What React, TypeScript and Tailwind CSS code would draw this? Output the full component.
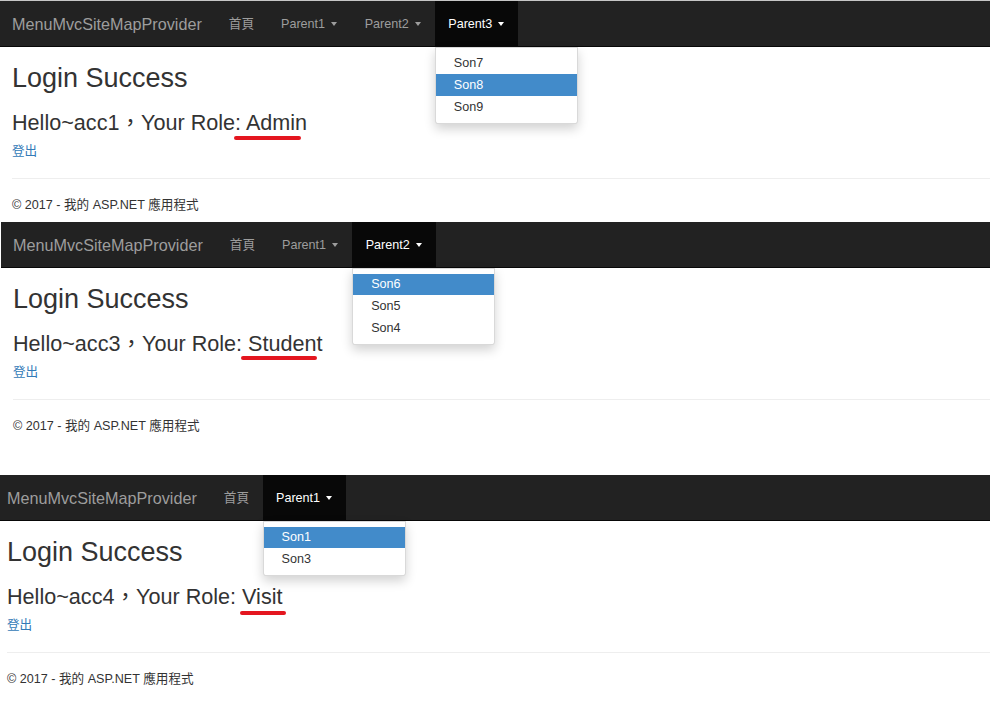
import React from 'react'

const FONT = '"Liberation Sans", Arial, "Noto Sans CJK TC", sans-serif'

type Shot = {
  user: string
  role: string
  menus: string[]
  active: string
  items: string[]
  highlight: string
  shift: string
  spacing: string
  mark: string
  topLine?: boolean
}

const shots: Shot[] = [
  {
    user: 'acc1',
    role: 'Admin',
    menus: ['Parent1', 'Parent2', 'Parent3'],
    active: 'Parent3',
    items: ['Son7', 'Son8', 'Son9'],
    highlight: 'Son8',
    shift: 'ml-0',
    spacing: 'mb-[8px]',
    mark: 'left-[-12px] w-[67px] top-[26px]',
    topLine: true,
  },
  {
    user: 'acc3',
    role: 'Student',
    menus: ['Parent1', 'Parent2'],
    active: 'Parent2',
    items: ['Son6', 'Son5', 'Son4'],
    highlight: 'Son6',
    shift: 'ml-[1px]',
    spacing: 'mb-[40px]',
    mark: 'left-[-7px] w-[76px] top-[25px]',
  },
  {
    user: 'acc4',
    role: 'Visit',
    menus: ['Parent1'],
    active: 'Parent1',
    items: ['Son1', 'Son3'],
    highlight: 'Son1',
    shift: 'ml-[-5px]',
    spacing: 'mb-0',
    mark: 'left-[-2px] w-[46px] top-[27px]',
  },
]

function Caret() {
  return (
    <span className="inline-block w-0 h-0 ml-[6px] align-middle border-t-[4px] border-x-[3.6px] border-t-current border-x-transparent" />
  )
}

function Navbar({ shot }: { shot: Shot }) {
  return (
    <div className="flex h-[46px] bg-[#222] border-b border-[#080808] text-[12.6px] leading-[18px]">
      <div className="flex items-center pl-[12px] pr-[13.5px] text-[16.2px] text-[#9d9d9d]">
        MenuMvcSiteMapProvider
      </div>
      <div className="flex items-center px-[13.5px] text-[#9d9d9d]">首頁</div>
      {shot.menus.map((m) => {
        const isActive = m === shot.active
        return (
          <div
            key={m}
            className={`relative flex items-center pl-[13.5px] pr-[14px] ${
              isActive ? 'bg-[#080808] text-white' : 'text-[#9d9d9d]'
            }`}
          >
            <span>{m}</span>
            <Caret />
            {isActive && (
              <div className="absolute left-0 top-[46px] z-10 w-[143px] pt-[4.5px] pb-[5px] bg-white border border-black/15 rounded-b-[3.6px] shadow-[0_5px_11px_rgba(0,0,0,0.18)]">
                {shot.items.map((s) => (
                  <div
                    key={s}
                    className={`flex items-center h-[21.7px] pl-[18px] ${
                      s === shot.highlight ? 'bg-[#428bca] text-white' : 'text-[#333]'
                    }`}
                  >
                    {s}
                  </div>
                ))}
              </div>
            )}
          </div>
        )
      })}
    </div>
  )
}

function Panel({ shot }: { shot: Shot }) {
  return (
    <div className={`${shot.shift} ${shot.spacing}`}>
      {shot.topLine && <div className="h-px bg-[#c6c6c6]" />}
      <Navbar shot={shot} />
      <div className="text-[#333]">
        <h2 className="mt-[16px] pl-[12px] text-[27px] leading-[30px]">Login Success</h2>
        <h3 className="mt-[18px] pl-[12px] text-[21.6px] leading-[24px]">
          Hello~{shot.user}，Your Role:{' '}
          <span className="relative">
            {shot.role}
            <span className={`absolute h-[4px] rounded-full bg-[#e4161f] ${shot.mark}`} />
          </span>
        </h3>
        <div className="mt-[7px] pl-[12px] text-[12.6px] leading-[18px]">
          <a className="text-[#337ab7]">登出</a>
        </div>
        <div className="mt-[18px] ml-[12px] border-t border-[#eee]" />
        <div className="mt-[17px] pl-[12px] text-[12.6px] leading-[18px]">© 2017 - 我的 ASP.NET 應用程式</div>
      </div>
    </div>
  )
}

export default function App() {
  return (
    <div className="w-[990px] h-[704px] overflow-hidden bg-white" style={{ fontFamily: FONT }}>
      {shots.map((s) => (
        <Panel key={s.user} shot={s} />
      ))}
    </div>
  )
}
